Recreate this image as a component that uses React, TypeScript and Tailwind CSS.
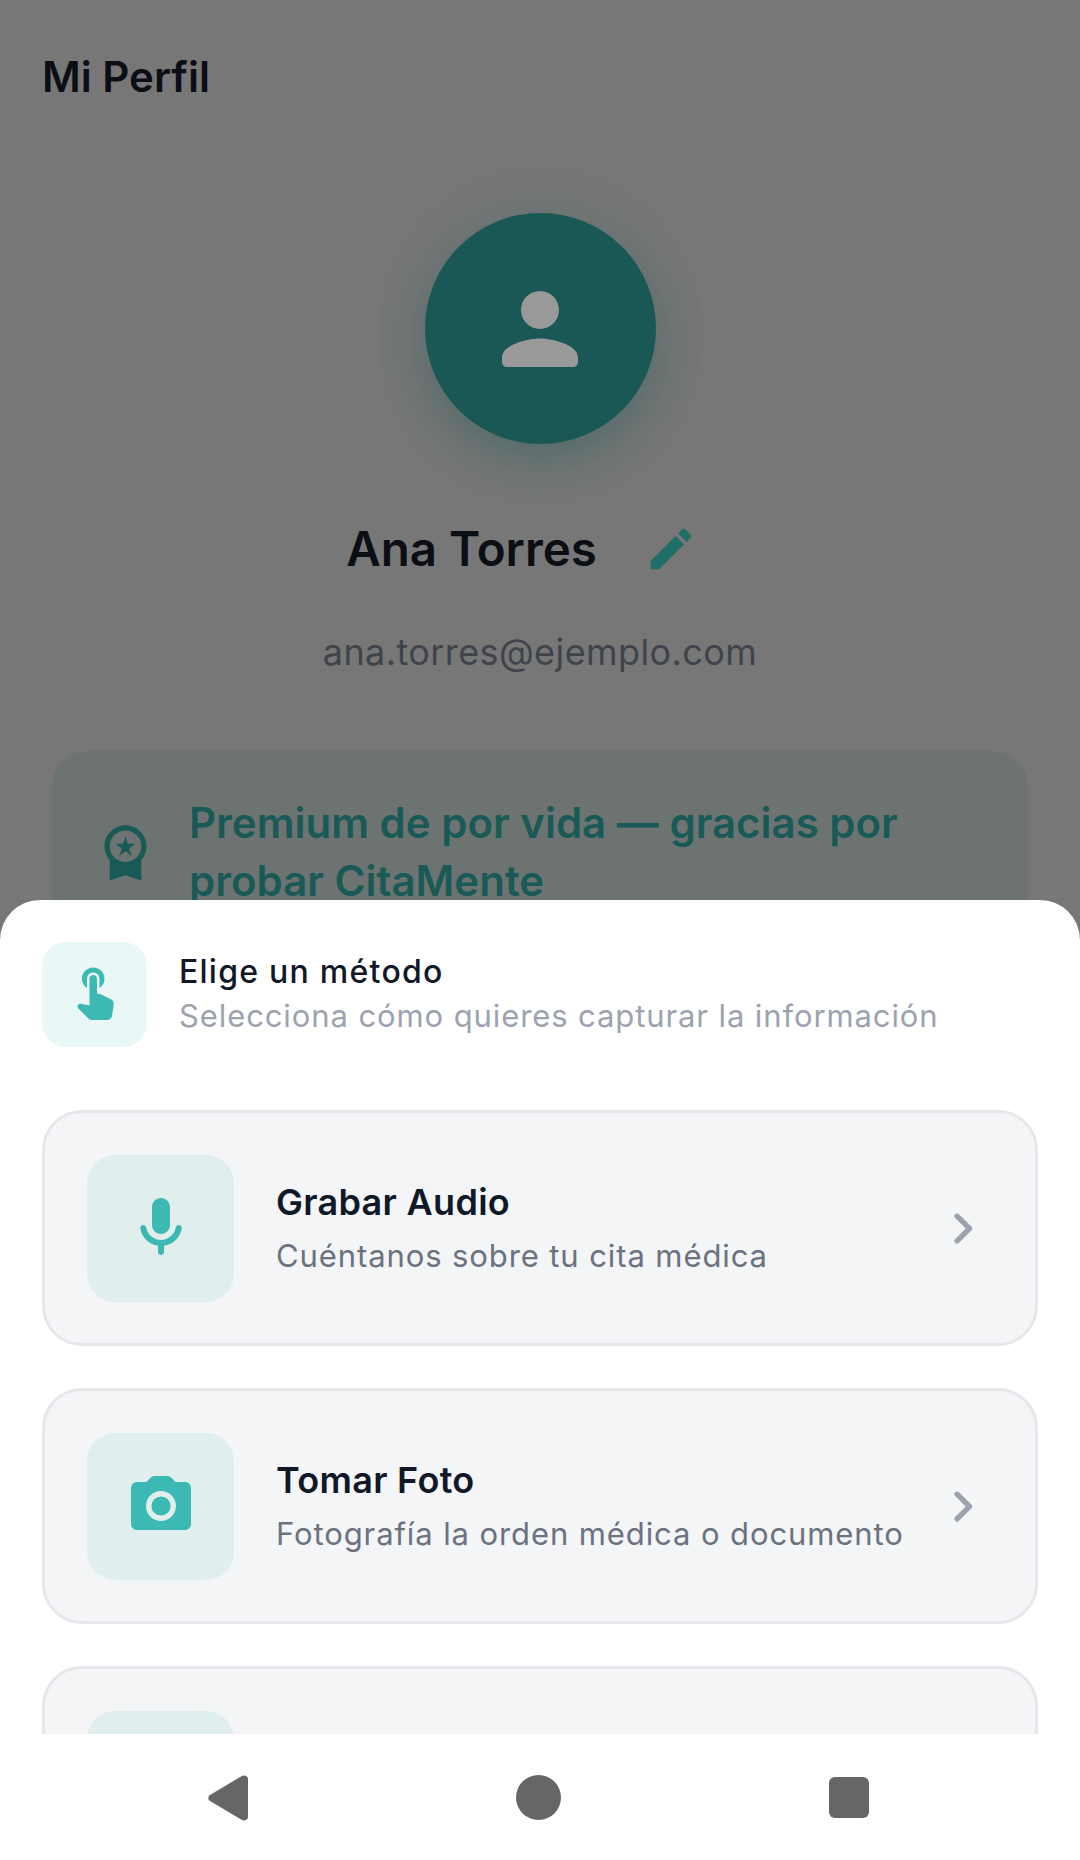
import React from "react";

const ICONS = {
  person:
    "M12 12c2.21 0 4-1.79 4-4s-1.79-4-4-4-4 1.79-4 4 1.79 4 4 4zm0 2c-2.67 0-8 1.34-8 4v1c0 .55.45 1 1 1h14c.55 0 1-.45 1-1v-1c0-2.66-5.33-4-8-4z",
  edit:
    "M3 17.46v3.04c0 .28.22.5.5.5h3.04c.13 0 .26-.05.35-.15L17.81 9.94l-3.75-3.75L3.15 17.1c-.1.1-.15.22-.15.36zM20.71 7.04a.996.996 0 0 0 0-1.41l-2.34-2.34a.996.996 0 0 0-1.41 0l-1.83 1.83 3.75 3.75 1.83-1.83z",
  premium:
    "M9.68 13.69 12 11.93l2.31 1.76-.88-2.85L15.75 9h-2.84L12 6.19 11.09 9H8.25l2.31 1.84-.88 2.85zM20 10c0-4.42-3.58-8-8-8s-8 3.58-8 8c0 2.03.76 3.87 2 5.28V23l6-2 6 2v-7.72c1.24-1.41 2-3.25 2-5.28zm-8-6c3.31 0 6 2.69 6 6s-2.69 6-6 6-6-2.69-6-6 2.69-6 6-6z",
  touch:
    "M8.79 9.24V5.5a2.5 2.5 0 0 1 5 0v3.74c1.21-.81 2-2.18 2-3.74 0-2.49-2.01-4.5-4.5-4.5s-4.5 2.01-4.5 4.5c0 1.56.79 2.93 2 3.74zm5.5 2.47c-.28-.14-.58-.21-.89-.21h-.61v-6c0-.83-.67-1.5-1.5-1.5s-1.5.67-1.5 1.5v10.74l-3.44-.72c-.37-.08-.76.04-1.03.31-.43.44-.43 1.14 0 1.58l4.01 4.01c.38.37.89.58 1.42.58h6.1c1 0 1.84-.73 1.98-1.72l.63-4.47c.12-.85-.32-1.69-1.09-2.07l-4.08-2.03z",
  mic:
    "M12 14c1.66 0 3-1.34 3-3V5c0-1.66-1.34-3-3-3S9 3.34 9 5v6c0 1.66 1.34 3 3 3zm5.91-3c-.49 0-.9.36-.98.85C16.52 14.2 14.47 16 12 16s-4.52-1.8-4.93-4.15c-.08-.49-.49-.85-.98-.85-.61 0-1.09.54-1 1.14.49 3 2.89 5.35 5.91 5.78V20c0 .55.45 1 1 1s1-.45 1-1v-2.08c3.02-.43 5.42-2.78 5.91-5.78.1-.6-.39-1.14-1-1.14z",
  camera:
    "M12 15.2a3.2 3.2 0 1 0 0-6.4 3.2 3.2 0 0 0 0 6.4zM20 4h-3.17l-1.24-1.35A1.99 1.99 0 0 0 14.12 2H9.88c-.56 0-1.1.24-1.48.65L7.17 4H4c-1.1 0-2 .9-2 2v12c0 1.1.9 2 2 2h16c1.1 0 2-.9 2-2V6c0-1.1-.9-2-2-2zm-8 13c-2.76 0-5-2.24-5-5s2.24-5 5-5 5 2.24 5 5-2.24 5-5 5z",
  chevron:
    "M9.29 6.71a.996.996 0 0 0 0 1.41L13.17 12l-3.88 3.88a.996.996 0 1 0 1.41 1.41l4.59-4.59a.996.996 0 0 0 0-1.41L10.7 6.7c-.38-.38-1.02-.38-1.41.01z",
};

function Icon({ name, className }: { name: keyof typeof ICONS; className: string }) {
  return (
    <svg viewBox="0 0 24 24" fill="currentColor" className={className}>
      <path d={ICONS[name]} />
    </svg>
  );
}

function MethodCard({
  icon,
  title,
  subtitle,
}: {
  icon?: keyof typeof ICONS;
  title?: string;
  subtitle?: string;
}) {
  return (
    <div className="flex h-[236px] shrink-0 items-center rounded-[40px] border-[3px] border-[#e5e7eb] bg-[#f3f5f7] pl-[42px] pr-[40px]">
      <div className="flex h-[147px] w-[147px] shrink-0 items-center justify-center rounded-[28px] bg-[#e0efed]">
        {icon && <Icon name={icon} className="h-[72px] w-[72px] text-[#3db9b3]" />}
      </div>
      <div className="ml-[42px] flex-1">
        <div className="mt-[1px] text-[36px] leading-[44px] font-semibold tracking-[0.3px] text-[#111827]">{title}</div>
        <div className="mt-[10px] text-[31px] leading-[44px] tracking-[0.9px] text-[#6b7280]">{subtitle}</div>
      </div>
      <Icon name="chevron" className="h-[65px] w-[65px] shrink-0 text-[#9ca3af]" />
    </div>
  );
}

export default function App() {
  return (
    <div className="relative h-[1860px] w-[1080px] overflow-hidden bg-[#777777] font-['Inter',sans-serif]">
      {/* Profile behind the scrim */}
      <header className="px-[42px] pt-[52px] text-[42px] leading-[50px] font-semibold text-[#0b0e14]">Mi Perfil</header>

      <main className="flex flex-col items-center px-[52px]">
        <div className="mt-[111px] flex h-[231px] w-[231px] items-center justify-center rounded-full bg-[#1a5855] shadow-[0_14px_44px_rgba(27,90,87,0.4),0_0_0_47px_rgba(110,120,118,0.12)]">
          <Icon name="person" className="h-[114px] w-[114px] text-[#999999]" />
        </div>

        <div className="mt-[75px] flex h-[60px] items-center pr-[36px]">
          <span className="text-[47.5px] leading-[60px] font-semibold text-[#0b0e14]">Ana Torres</span>
          <Icon name="edit" className="ml-[47px] h-[54px] w-[54px] text-[#1d6f68]" />
        </div>

        <div className="mt-[51px] text-[36px] leading-[44px] tracking-[0.4px] text-[#3f434b]">ana.torres@ejemplo.com</div>

        <div className="mt-[77px] flex w-full items-center rounded-[36px] bg-[#6c7371] pt-[43px] pb-[40px] pl-[42px] pr-[60px]">
          <Icon name="premium" className="-mt-[2px] h-[63px] w-[63px] shrink-0 text-[#1a5a56]" />
          <p className="ml-[32px] text-[42px] leading-[58px] font-semibold text-[#1a5a56]">
            Premium de por vida — gracias por probar CitaMente
          </p>
        </div>
      </main>

      {/* Bottom sheet */}
      <section className="absolute inset-x-0 top-[900px] bottom-0 flex flex-col rounded-t-[40px] bg-white">
        <div className="flex items-center px-[42px] pt-[42px]">
          <div className="flex h-[105px] w-[105px] shrink-0 items-center justify-center rounded-[24px] bg-[#e9f8f7]">
            <Icon name="touch" className="h-[60px] w-[60px] text-[#3db9b3]" />
          </div>
          <div className="ml-[32px] -mt-[2px]">
            <div className="text-[32px] leading-[44px] font-medium tracking-[1.25px] text-[#111827]">Elige un método</div>
            <div className="text-[31px] leading-[44px] tracking-[0.9px] text-[#9ca3af]">
              Selecciona cómo quieres capturar la información
            </div>
          </div>
        </div>

        <div className="mt-[63px] flex flex-1 flex-col gap-[42px] overflow-hidden px-[42px]">
          <MethodCard icon="mic" title="Grabar Audio" subtitle="Cuéntanos sobre tu cita médica" />
          <MethodCard icon="camera" title="Tomar Foto" subtitle="Fotografía la orden médica o documento" />
          <MethodCard />
        </div>

        <nav className="flex h-[126px] shrink-0 items-start justify-center gap-[268px] bg-white pt-[41px] pr-[3px]">
          <svg viewBox="0 0 40 46" className="h-[46px] w-[40px] text-[#666666]" fill="currentColor">
            <path d="M33.5 1.2 1.6 20.200a4 4 0 0 0 0 5.600l31.900 19c3 1.400 6.500.2 6.500-3V4c0-3-3.500-4.200-6.500-2.800z" />
          </svg>
          <div className="h-[45px] w-[45px] rounded-full bg-[#666666]" />
          <div className="mt-[2px] h-[41px] w-[40px] rounded-[6px] bg-[#666666]" />
        </nav>
      </section>
    </div>
  );
}
